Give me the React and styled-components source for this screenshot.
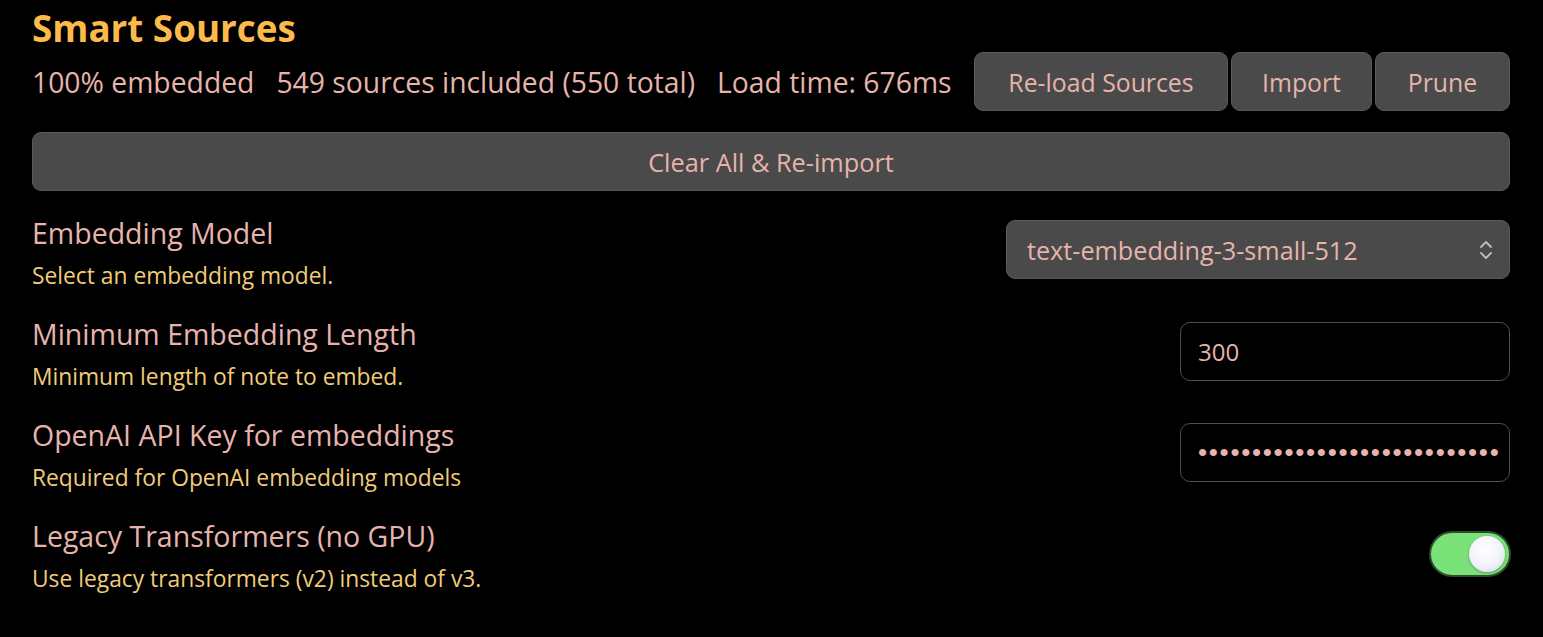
import React, { useState } from "react"
import styled, { createGlobalStyle } from "styled-components"

const Global = createGlobalStyle`
   html, body {
      margin: 0;
      background: #000;
   }
   body {
      font-family: 'Open Sans', 'Noto Sans', sans-serif;
   }
`

const Page = styled.div`
   padding: 6px 33px 0 32px;
   color: #e6b4ac;
`

const Title = styled.h2`
   margin: 0;
   font-size: 36.8px;
   font-weight: 700;
   color: #fcba4c;
   line-height: 44px;
`

const StatusBar = styled.div`
   display: flex;
   align-items: center;
   justify-content: space-between;
   margin-top: 2px;
`

const Stats = styled.div`
   display: flex;
   gap: 22px;
   font-size: 28.3px;
   white-space: nowrap;
`

const Actions = styled.div`
   display: flex;
   gap: 3px;
   margin-left: 20px;
`

const Button = styled.button`
   height: 59px;
   padding: 0;
   width: ${p => p.$w ? p.$w + "px" : "auto"};
   background: #4a4a4a;
   border: 1.5px solid #5a5a5a;
   border-radius: 9px;
   color: #e6b4ac;
   font-family: inherit;
   font-size: 24.8px;
   cursor: pointer;
   &:hover {
      background: #525252;
   }
`

const WideButton = styled(Button)`
   display: block;
   width: 100%;
   margin-top: 21px;
   font-size: 25.3px;
`

const SettingList = styled.div`
   margin-top: 11px;
`

const Setting = styled.div`
   display: flex;
   align-items: center;
   justify-content: space-between;
   padding: 13px 0 14px;
`

const Info = styled.div`
   display: flex;
   flex-direction: column;
`

const Name = styled.div`
   font-size: 28.5px;
   line-height: 36px;
   color: #e6b4ac;
`

const Desc = styled.div`
   font-size: 22.8px;
   line-height: 26px;
   margin-top: 12px;
   color: #f0cc7a;
`

const SelectBox = styled.div`
   position: relative;
   width: 504px;
   height: 59px;
   margin-top: -5px;
   select {
      appearance: none;
      width: 100%;
      height: 100%;
      background: #4a4a4a;
      border: 1.5px solid #5a5a5a;
      border-radius: 9px;
      color: #e6b4ac;
      font-family: inherit;
      font-size: 25.2px;
      padding: 0 20px;
      outline: none;
   }
   svg {
      position: absolute;
      right: 17px;
      top: 20px;
      pointer-events: none;
   }
`

const TextInput = styled.input`
   width: 330px;
   height: 59px;
   margin-top: -3px;
   box-sizing: border-box;
   background: #000;
   border: 1.5px solid #4e4e4e;
   border-radius: 10px;
   color: #e6b4ac;
   font-family: ${p => p.type === "password" ? "'Liberation Sans', sans-serif" : "inherit"};
   font-size: ${p => p.type === "password" ? "26px" : "24px"};
   padding: 0 8px 0 17px;
   outline: none;
   letter-spacing: ${p => p.type === "password" ? "1.7px" : "0"};
`

const Toggle = styled.button`
   position: relative;
   width: 82px;
   height: 46px;
   margin: -3px -1px 0 0;
   border-radius: 23px;
   border: 2px solid #2b4d2b;
   background: ${p => p.$on ? "#7be27a" : "#444"};
   cursor: pointer;
   padding: 0;
   &::after {
      content: "";
      position: absolute;
      top: 3px;
      left: ${p => p.$on ? "38px" : "3px"};
      width: 36px;
      height: 36px;
      border-radius: 50%;
      background: radial-gradient(circle at 45% 40%, #ffffff 0%, #f3f3fb 50%, #d6d6ec 100%);
      box-shadow: 0 1px 3px rgba(0,0,0,0.3);
      transition: left .2s ease;
   }
`

const Chevrons = () => (
   <svg width="14" height="20" viewBox="0 0 14 20" fill="none" stroke="#bdbdbd" strokeWidth="1.8" strokeLinecap="round" strokeLinejoin="round">
      <path d="M2 7 L7 2 L12 7" />
      <path d="M2 13 L7 18 L12 13" />
   </svg>
)

export default function App() {
   const [legacy, setLegacy] = useState(true)

   return (
      <Page>
         <Global />
         <Title>Smart Sources</Title>
         <StatusBar>
            <Stats>
               <span>100% embedded</span>
               <span>549 sources included (550 total)</span>
               <span>Load time: 676ms</span>
            </Stats>
            <Actions>
               <Button $w={254}>Re-load Sources</Button>
               <Button $w={141}>Import</Button>
               <Button $w={135}>Prune</Button>
            </Actions>
         </StatusBar>
         <WideButton>Clear All &amp; Re-import</WideButton>

         <SettingList>
            <Setting>
               <Info>
                  <Name>Embedding Model</Name>
                  <Desc>Select an embedding model.</Desc>
               </Info>
               <SelectBox>
                  <select defaultValue="text-embedding-3-small-512">
                     <option>text-embedding-3-small-512</option>
                     <option>text-embedding-3-small</option>
                     <option>text-embedding-3-large</option>
                  </select>
                  <Chevrons />
               </SelectBox>
            </Setting>

            <Setting>
               <Info>
                  <Name>Minimum Embedding Length</Name>
                  <Desc>Minimum length of note to embed.</Desc>
               </Info>
               <TextInput type="text" defaultValue="300" />
            </Setting>

            <Setting>
               <Info>
                  <Name>OpenAI API Key for embeddings</Name>
                  <Desc>Required for OpenAI embedding models</Desc>
               </Info>
               <TextInput type="password" defaultValue="sk-proj-xxxxxxxxxxxxxxxxxxxx" />
            </Setting>

            <Setting>
               <Info>
                  <Name>Legacy Transformers (no GPU)</Name>
                  <Desc>Use legacy transformers (v2) instead of v3.</Desc>
               </Info>
               <Toggle $on={legacy} onClick={() => setLegacy(!legacy)} />
            </Setting>
         </SettingList>
      </Page>
   )
}
